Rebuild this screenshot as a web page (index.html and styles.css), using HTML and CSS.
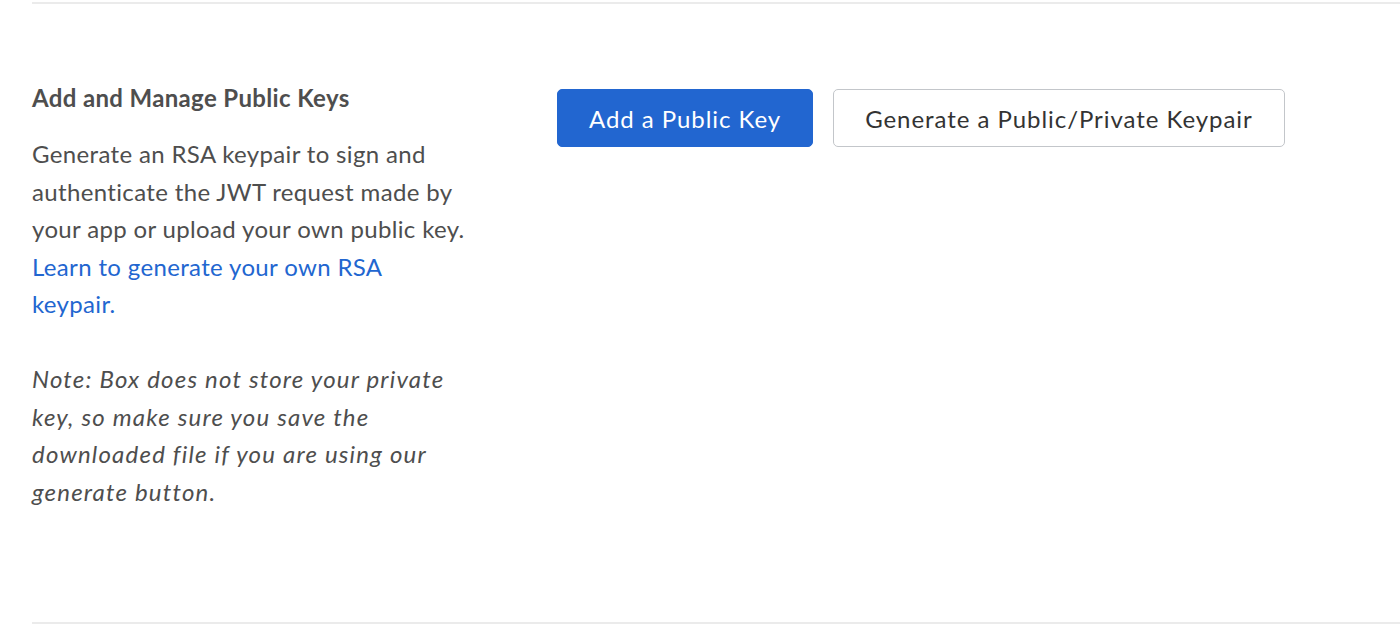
FILE: index.html
```html
<!DOCTYPE html>
<html>
<head>
<meta charset="utf-8">
<link rel="stylesheet" href="styles.css">
</head>
<body>
<section class="panel">
  <div class="info">
    <h2 class="title">Add and Manage Public Keys</h2>
    <p class="desc">Generate an RSA keypair to sign and authenticate the JWT request made by your app or upload your own public key. <a class="link" href="#">Learn to generate your own RSA keypair.</a></p>
    <p class="note">Note: Box does not store your private key, so make sure you save the downloaded file if you are using our generate button.</p>
  </div>
  <div class="actions">
    <button class="btn btn-primary">Add a Public Key</button>
    <button class="btn btn-secondary">Generate a Public/Private Keypair</button>
  </div>
</section>
</body>
</html>
```

FILE: styles.css
```css
html, body {
  margin: 0;
  padding: 0;
  background: #fff;
}
body {
  font-family: Lato, "Liberation Sans", sans-serif;
  color: #4e4e4e;
  padding-left: 32px;
}
.panel {
  border-top: 2px solid #ebebeb;
  border-bottom: 2px solid #ebebeb;
  margin-top: 2px;
  height: 622px;
  box-sizing: border-box;
  display: flex;
  padding-top: 79px;
}
.info {
  width: 436px;
  flex: none;
}
.title {
  margin: 0 0 22px 0;
  font-size: 24px;
  line-height: 30px;
  font-weight: 700;
  letter-spacing: 0.35px;
  color: #4e4e4e;
}
.desc, .note {
  margin: 0 0 37.5px 0;
  font-size: 24px;
  line-height: 37.5px;
  letter-spacing: 0.35px;
}
.note {
  font-style: italic;
  letter-spacing: 1.2px;
}
.link {
  color: #2266d0;
  text-decoration: none;
}
.actions {
  margin-left: 89px;
  display: flex;
  gap: 20px;
  align-items: flex-start;
  padding-top: 6px;
}
.btn {
  font-family: Lato, "Liberation Sans", sans-serif;
  font-size: 24px;
  height: 58px;
  border-radius: 5px;
  padding: 0 31px;
  letter-spacing: 0.95px;
  cursor: pointer;
}
.btn-primary {
  background: #2266d0;
  border: 1px solid #2266d0;
  color: #fff;
}
.btn-secondary {
  background: #fff;
  border: 1px solid #c3c6ca;
  color: #333;
}
```
